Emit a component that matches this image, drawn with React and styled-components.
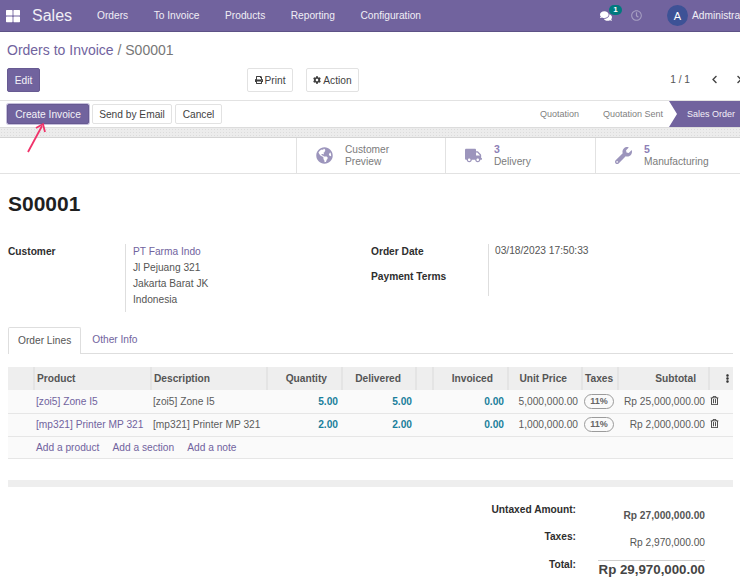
import React from "react";
import styled, { createGlobalStyle } from "styled-components";
import {
  FaThLarge,
  FaComments,
  FaRegClock,
  FaPrint,
  FaCog,
  FaChevronLeft,
  FaChevronRight,
  FaGlobeAmericas,
  FaTruck,
  FaWrench,
  FaEllipsisV,
  FaRegTrashAlt,
} from "react-icons/fa";

const GlobalStyle = createGlobalStyle`
  html, body {
    margin: 0;
    padding: 0;
    background: #fff;
    overflow: hidden;
  }
  body {
    font-family: "Liberation Sans", Arial, sans-serif;
    font-size: 10.2px;
    color: #4c4c4c;
  }
`;

const Page = styled.div`
  position: relative;
  width: 740px;
  height: 583px;
  overflow: hidden;
`;

const Navbar = styled.header`
  display: flex;
  align-items: center;
  height: 32px;
  box-sizing: border-box;
  background: #71639e;
  border-bottom: 1px solid #5d5286;
  color: #f0eef5;
  white-space: nowrap;
`;

const AppsIcon = styled(FaThLarge)`
  margin-left: 6px;
  font-size: 14px;
  color: #fff;
`;

const Brand = styled.span`
  margin-left: 12px;
  margin-right: 25px;
  font-size: 16px;
`;

const NavItem = styled.span`
  margin-right: 25.5px;
  font-size: 10.2px;
`;

const NavRight = styled.div`
  display: flex;
  align-items: center;
  margin-left: auto;
  width: 140px;
  flex: none;
`;

const ChatWrap = styled.span`
  position: relative;
  display: inline-flex;
  flex: none;
  font-size: 12px;
  color: #fff;
  margin-right: 19px;
`;

const ChatBadge = styled.span`
  position: absolute;
  top: -5px;
  left: 9px;
  width: 13px;
  height: 10px;
  border-radius: 5px;
  background: #00797e;
  color: #fff;
  font-size: 8px;
  font-weight: bold;
  line-height: 10px;
  text-align: center;
`;

const ClockIcon = styled(FaRegClock)`
  flex: none;
  font-size: 11px;
  color: #a79fc2;
`;

const Avatar = styled.span`
  width: 21px;
  height: 21px;
  margin-left: 25px;
  margin-right: 4px;
  border-radius: 50%;
  background: #3d5296;
  color: #fff;
  font-size: 11px;
  line-height: 22px;
  text-align: center;
  flex: none;
`;

const ControlPanel = styled.section`
  height: 68px;
  padding: 0 7px;
  border-bottom: 1px solid #e2e2e2;
`;

const Breadcrumb = styled.div`
  padding-top: 10px;
  height: 26px;
  font-size: 14px;
  line-height: 17px;
  color: #71639e;

  span {
    color: #777;
  }
`;

const ControlRow = styled.div`
  display: flex;
  align-items: flex-start;
`;

const Button = styled.button`
  height: ${(p) => p.$height || 24}px;
  width: ${(p) => p.$width}px;
  padding: 0;
  box-sizing: border-box;
  display: inline-flex;
  align-items: center;
  justify-content: center;
  gap: 2px;
  border: 1px solid ${(p) => (p.$primary ? "#675a92" : "#e2e2e2")};
  border-radius: 2px;
  background: ${(p) => (p.$primary ? "#71639e" : "#fff")};
  color: ${(p) => (p.$primary ? "#f4f2f8" : "#3f3f3f")};
  font-family: inherit;
  font-size: 10.2px;
  white-space: nowrap;

  svg {
    font-size: 8px;
  }
`;

const ActionGroup = styled.div`
  display: flex;
  gap: 13px;
  margin-left: 207px;
`;

const Pager = styled.div`
  display: flex;
  align-items: center;
  gap: 16px;
  height: 22px;
  margin-left: auto;
  margin-right: -11px;
  color: #555;
  font-size: 10.2px;

  svg {
    font-size: 9px;
    color: #444;
  }

  span {
    margin-right: 4px;
  }
`;

const StatusBar = styled.div`
  display: flex;
  align-items: center;
  justify-content: space-between;
  height: 27px;
  box-sizing: border-box;
  padding-left: 7px;
  border-bottom: 1px solid #dcdcdc;
`;

const StatusButtons = styled.div`
  display: flex;
  gap: 3px;
`;

const CreateButton = styled(Button)`
  box-shadow: 0 0 0 1px #c7c0dc;
`;

const Stages = styled.div`
  display: flex;
  align-items: center;
  height: 26px;
`;

const Stage = styled.span`
  display: flex;
  align-items: center;
  height: 26px;
  padding-right: ${(p) => p.$right}px;
  color: #7f7f7f;
  font-size: 9px;
  white-space: nowrap;
`;

const ActiveStage = styled.span`
  display: flex;
  align-items: center;
  width: 71px;
  height: 26px;
  box-sizing: border-box;
  padding-left: 18px;
  background: #71639e;
  clip-path: polygon(0 0, 100% 0, 100% 100%, 0 100%, 8px 50%);
  color: #f3f1f7;
  font-size: 9px;
  white-space: nowrap;
`;

const Hatch = styled.div`
  height: 10px;
  box-sizing: border-box;
  border-bottom: 1px solid #d4d4d4;
  background-color: #ececec;
  background-image: radial-gradient(#dcdcdc 0.6px, transparent 0.7px);
  background-size: 3px 3px;
`;

const ButtonBox = styled.div`
  display: flex;
  justify-content: flex-end;
  height: 36px;
  box-sizing: border-box;
  border-bottom: 1px solid #e2e2e2;
`;

const StatButton = styled.div`
  display: flex;
  align-items: center;
  width: ${(p) => p.$width}px;
  flex: none;
  box-sizing: border-box;
  padding-left: 18px;
  border-left: 1px solid #e2e2e2;
`;

const StatIcon = styled.span`
  display: flex;
  justify-content: center;
  width: 18px;
  margin-right: 12px;
  font-size: 17px;
  color: #9c95bc;
`;

const StatText = styled.div`
  font-size: 10.2px;
  line-height: 11.5px;
  color: #7b7b7b;

  b {
    display: block;
    font-size: 10.5px;
    font-weight: bold;
    color: #8d80b6;
  }
`;

const Sheet = styled.main`
  padding: 0 7px 0 8px;
`;

const Title = styled.h1`
  margin: 18px 0 28px;
  font-size: 21px;
  line-height: 24px;
  font-weight: bold;
  color: #1f1f1f;
`;

const FormGrid = styled.div`
  display: grid;
  grid-template-columns: 117px 246px 117px 1fr;
  height: 56px;
  margin-bottom: 27px;
  font-size: 10.2px;
`;

const Label = styled.div`
  margin-top: ${(p) => p.$top || 0}px;
  font-weight: bold;
  color: #2e2e2e;
  line-height: 12px;
`;

const Value = styled.div`
  border-left: 1px solid #dedede;
  padding-left: ${(p) => p.$pad || 7}px;
  padding-top: ${(p) => p.$padTop || 0}px;
  height: ${(p) => p.$height}px;
  box-sizing: border-box;
  color: #555;
`;

const Address = styled.div`
  line-height: 16px;
`;

const PartnerLink = styled.div`
  color: #71639e;
`;

const Stack = styled.div`
  display: flex;
  flex-direction: column;
  gap: 13px;
`;

const Tabs = styled.nav`
  display: flex;
  height: 26px;
  border-bottom: 1px solid #dedede;
  font-size: 10.2px;
`;

const Tab = styled.span`
  height: 27px;
  box-sizing: border-box;
  line-height: 25px;
  padding: 0 ${(p) => (p.$active ? 9 : 11)}px;
  color: ${(p) => (p.$active ? "#555" : "#71639e")};
  ${(p) =>
    p.$active &&
    `
    background: #fff;
    border: 1px solid #dedede;
    border-bottom: 0;
    border-radius: 2px 2px 0 0;
  `}
`;

const Table = styled.table`
  width: 725px;
  margin-top: 13px;
  border-collapse: collapse;
  table-layout: fixed;
  font-size: 10.2px;
`;

const Th = styled.th`
  height: 23px;
  padding: 0 ${(p) => p.$right || 2}px 0 2px;
  box-sizing: border-box;
  background: #eeeeee;
  border-left: ${(p) => (p.$first ? "0" : "2px solid #e4e4e4")};
  color: #555;
  font-size: 10.2px;
  font-weight: bold;
  text-align: ${(p) => (p.$right ? "right" : "left")};
  white-space: nowrap;

  svg {
    font-size: 9px;
    color: #333;
    vertical-align: -1px;
  }
`;

const Row = styled.tr`
  height: ${(p) => p.$height || 23}px;
  background: #fafafa;
  border-bottom: 1px solid #e6e6e6;
`;

const Td = styled.td`
  padding: 0 ${(p) => (p.$num ? 4 : 0)}px 0 ${(p) => (p.$num ? 0 : 2)}px;
  color: ${(p) => (p.$link ? "#71639e" : "#5c5c5c")};
  text-align: ${(p) => (p.$num ? "right" : "left")};
  white-space: nowrap;
  overflow: visible;
`;

const Qty = styled(Td)`
  color: #1a7f9c;
  font-weight: bold;
`;

const TaxPill = styled.span`
  display: inline-block;
  width: 28px;
  height: 13px;
  box-sizing: content-box;
  border: 1px solid #9b9b9b;
  border-radius: 8px;
  font-size: 9px;
  font-weight: bold;
  line-height: 13px;
  text-align: center;
  color: #666;
`;

const TrashIcon = styled(FaRegTrashAlt)`
  font-size: 9px;
  color: #333;
  margin-left: -1px;
`;

const AddLinks = styled.div`
  display: flex;
  gap: 13px;
  color: #71639e;
`;

const Divider = styled.div`
  width: 725px;
  height: 7px;
  margin-top: 21px;
  background: #eeeeee;
`;

const Totals = styled.div`
  display: grid;
  grid-template-columns: 136px 129px;
  justify-content: end;
  width: 697px;
  margin-top: 17px;
  font-size: 10.2px;
`;

const TotalLabel = styled.div`
  height: 27.5px;
  font-weight: bold;
  color: #2e2e2e;
  text-align: right;
  line-height: 12px;
`;

const TotalValue = styled.div`
  height: 27.5px;
  padding-top: 6px;
  box-sizing: border-box;
  text-align: right;
  line-height: 12px;
  color: #555;
  font-weight: ${(p) => (p.$bold ? "bold" : "normal")};
`;

const GrandTotal = styled.div`
  justify-self: end;
  width: 107px;
  margin-top: 1px;
  padding-top: 1px;
  border-top: 1px solid #cfcfcf;
  color: #444;
  font-size: 13.3px;
  font-weight: bold;
  line-height: 16px;
  text-align: right;
  white-space: nowrap;
`;

const Arrow = styled.svg`
  position: absolute;
  left: 25px;
  top: 120px;
  width: 24px;
  height: 34px;
`;

const lines = [
  { ref: "[zoi5] Zone I5", qty: "5.00", price: "5,000,000.00", subtotal: "Rp 25,000,000.00" },
  { ref: "[mp321] Printer MP 321", qty: "2.00", price: "1,000,000.00", subtotal: "Rp 2,000,000.00" },
];

export default function App() {
  return (
    <Page>
      <GlobalStyle />
      <Navbar>
        <AppsIcon />
        <Brand>Sales</Brand>
        <NavItem>Orders</NavItem>
        <NavItem>To Invoice</NavItem>
        <NavItem>Products</NavItem>
        <NavItem>Reporting</NavItem>
        <NavItem>Configuration</NavItem>
        <NavRight>
          <ChatWrap>
            <FaComments />
            <ChatBadge>1</ChatBadge>
          </ChatWrap>
          <ClockIcon />
          <Avatar>A</Avatar>
          <NavItem>Administrator</NavItem>
        </NavRight>
      </Navbar>

      <ControlPanel>
        <Breadcrumb>
          Orders to Invoice <span>/ S00001</span>
        </Breadcrumb>
        <ControlRow>
          <Button $primary $width={33}>Edit</Button>
          <ActionGroup>
            <Button $width={46}><FaPrint /> Print</Button>
            <Button $width={53}><FaCog /> Action</Button>
          </ActionGroup>
          <Pager>
            <span>1 / 1</span>
            <FaChevronLeft />
            <FaChevronRight />
          </Pager>
        </ControlRow>
      </ControlPanel>

      <StatusBar>
        <StatusButtons>
          <CreateButton $primary $height={20} $width={82}>Create Invoice</CreateButton>
          <Button $height={20} $width={80}>Send by Email</Button>
          <Button $height={20} $width={47}>Cancel</Button>
        </StatusButtons>
        <Stages>
          <Stage $right={24}>Quotation</Stage>
          <Stage $right={6}>Quotation Sent</Stage>
          <ActiveStage>Sales Order</ActiveStage>
        </Stages>
      </StatusBar>
      <Hatch />

      <ButtonBox>
        <StatButton $width={149}>
          <StatIcon><FaGlobeAmericas /></StatIcon>
          <StatText>Customer<br />Preview</StatText>
        </StatButton>
        <StatButton $width={150}>
          <StatIcon><FaTruck /></StatIcon>
          <StatText><b>3</b>Delivery</StatText>
        </StatButton>
        <StatButton $width={145}>
          <StatIcon><FaWrench /></StatIcon>
          <StatText><b>5</b>Manufacturing</StatText>
        </StatButton>
      </ButtonBox>

      <Sheet>
        <Title>S00001</Title>
        <FormGrid>
          <Label $top={2}>Customer</Label>
          <Value $height={68}>
            <Address>
              <PartnerLink>PT Farma Indo</PartnerLink>
              Jl Pejuang 321<br />
              Jakarta Barat JK<br />
              Indonesia
            </Address>
          </Value>
          <Stack>
            <Label $top={2}>Order Date</Label>
            <Label>Payment Terms</Label>
          </Stack>
          <Value $height={52} $pad={6} $padTop={1}>03/18/2023 17:50:33</Value>
        </FormGrid>

        <Tabs>
          <Tab $active>Order Lines</Tab>
          <Tab>Other Info</Tab>
        </Tabs>

        <Table>
          <colgroup>
            <col width="26" />
            <col width="117" />
            <col width="116" />
            <col width="75" />
            <col width="74" />
            <col width="17" />
            <col width="75" />
            <col width="74" />
            <col width="36" />
            <col width="91" />
            <col width="24" />
          </colgroup>
          <thead>
            <tr>
              <Th $first />
              <Th>Product</Th>
              <Th>Description</Th>
              <Th $right={14}>Quantity</Th>
              <Th $right={14}>Delivered</Th>
              <Th />
              <Th $right={14}>Invoiced</Th>
              <Th $right={14}>Unit Price</Th>
              <Th>Taxes</Th>
              <Th $right={12}>Subtotal</Th>
              <Th $right={1}><FaEllipsisV /></Th>
            </tr>
          </thead>
          <tbody>
            {lines.map((line) => (
              <Row key={line.ref}>
                <Td />
                <Td $link>{line.ref}</Td>
                <Td>{line.ref}</Td>
                <Qty $num>{line.qty}</Qty>
                <Qty $num>{line.qty}</Qty>
                <Td />
                <Qty $num>0.00</Qty>
                <Td $num>{line.price}</Td>
                <Td $num><TaxPill>11%</TaxPill></Td>
                <Td $num>{line.subtotal}</Td>
                <Td><TrashIcon /></Td>
              </Row>
            ))}
            <Row $height={22}>
              <Td />
              <Td colSpan={10} $link>
                <AddLinks>
                  <span>Add a product</span>
                  <span>Add a section</span>
                  <span>Add a note</span>
                </AddLinks>
              </Td>
            </Row>
          </tbody>
        </Table>

        <Divider />

        <Totals>
          <TotalLabel>Untaxed Amount:</TotalLabel>
          <TotalValue $bold>Rp 27,000,000.00</TotalValue>
          <TotalLabel>Taxes:</TotalLabel>
          <TotalValue>Rp 2,970,000.00</TotalValue>
          <TotalLabel>Total:</TotalLabel>
          <GrandTotal>Rp 29,970,000.00</GrandTotal>
        </Totals>
      </Sheet>

      <Arrow viewBox="0 0 24 34">
        <path d="M3 32 L17 6" stroke="#f0336a" strokeWidth="1.8" fill="none" />
        <path d="M11 8 L18 4 L20 12" stroke="#f0336a" strokeWidth="1.8" fill="none" />
      </Arrow>
    </Page>
  );
}
